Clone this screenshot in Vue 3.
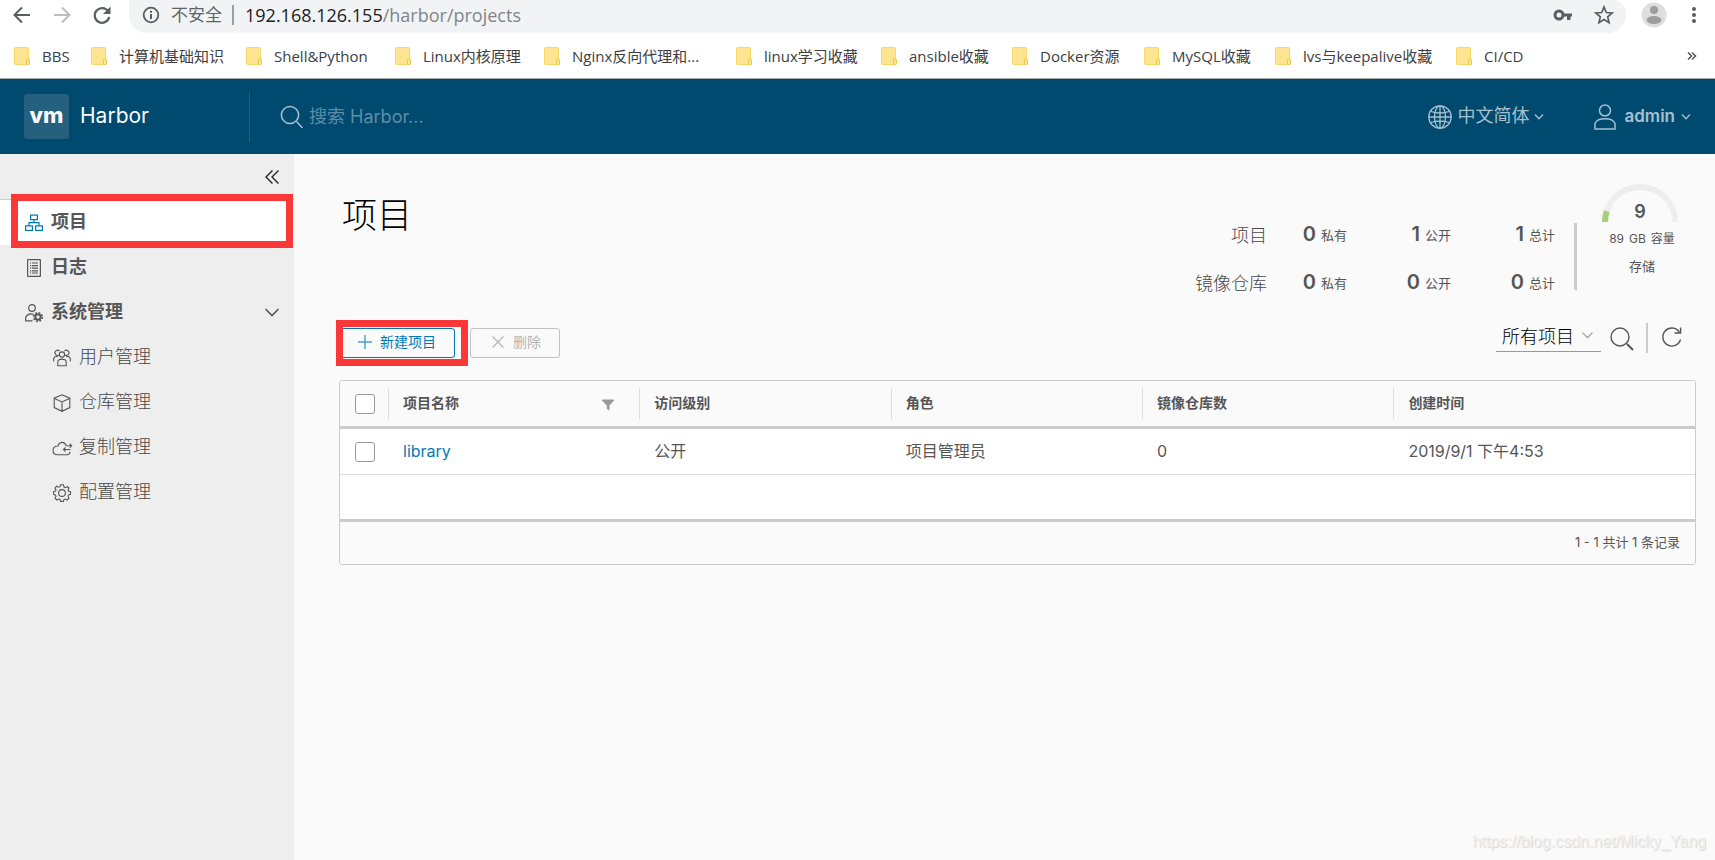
<script setup>
import { ref } from 'vue'

const bookmarks = [
  'BBS', '计算机基础知识', 'Shell&Python', 'Linux内核原理', 'Nginx反向代理和...', 'linux学习收藏',
  'ansible收藏', 'Docker资源', 'MySQL收藏', 'lvs与keepalive收藏', 'CI/CD'
]
const admin = [
  { name: '用户管理', icon: 'users' },
  { name: '仓库管理', icon: 'box' },
  { name: '复制管理', icon: 'cloud' },
  { name: '配置管理', icon: 'cog' }
]
const stats = [
  { label: '项目', values: [[0, '私有'], [1, '公开'], [1, '总计']] },
  { label: '镜像仓库', values: [[0, '私有'], [0, '公开'], [0, '总计']] }
]
const projects = [
  { name: 'library', access: '公开', role: '项目管理员', repos: 0, created: '2019/9/1 下午4:53' }
]
const filter = ref('所有项目')
</script>

<template>
  <div class="page">
    <div class="browser">
      <div class="toolbar">
        <button class="nav-btn" aria-label="后退">
          <svg width="18" height="18" viewBox="0 0 18 18" fill="none" stroke="#5a5e62" stroke-width="2"><path d="M17 9H2M9 1.5L1.5 9L9 16.5" /></svg>
        </button>
        <button class="nav-btn" aria-label="前进">
          <svg width="18" height="18" viewBox="0 0 18 18" fill="none" stroke="#bbbdbf" stroke-width="2"><path d="M1 9H16M9 1.5L16.500 9L9 16.500" /></svg>
        </button>
        <button class="nav-btn" aria-label="刷新页面">
          <svg width="18" height="18" viewBox="0 0 18 18"><path d="M15.200 5.500A7.300 7.300 0 1 0 16.200 11" fill="none" stroke="#5a5e62" stroke-width="2.200" /><path d="M17.500 0.500V8H10z" fill="#5a5e62" /></svg>
        </button>
        <div class="address">
          <svg width="18" height="18" viewBox="0 0 18 18"><circle cx="9" cy="9" r="7.300" fill="none" stroke="#5a5e62" stroke-width="1.800" /><path d="M9 8V13M9 4.800V6.700" stroke="#5a5e62" stroke-width="2" /></svg>
          <span class="unsafe">不安全</span>
          <span class="bar"></span>
          <span class="url">192.168.126.155<i>/harbor/projects</i></span>
          <svg class="key" width="20" height="12" viewBox="0 0 20 12"><circle cx="6" cy="6" r="4" fill="none" stroke="#5a5e62" stroke-width="3" /><path d="M9 4.500H19V7.500H17.500V11H14V7.500H9z" fill="#5a5e62" /></svg>
          <svg width="20" height="20" viewBox="0 0 20 20" fill="none" stroke="#5a5e62" stroke-width="1.700"><path d="M10 2L12.300 7.500L18.200 8L13.700 11.900L15.100 17.700L10 14.600L4.900 17.700L6.300 11.900L1.800 8L7.700 7.500z" /></svg>
        </div>
        <svg class="avatar" width="26" height="26" viewBox="0 0 26 26"><circle cx="13" cy="13" r="12.500" fill="#dedede" /><circle cx="13" cy="8" r="4" fill="#9d9d9d" /><ellipse cx="13" cy="18" rx="7.500" ry="4" fill="#9d9d9d" /></svg>
        <svg width="6" height="18" viewBox="0 0 6 18" fill="#5a5e62"><circle cx="3" cy="3" r="2" /><circle cx="3" cy="9" r="2" /><circle cx="3" cy="15" r="2" /></svg>
      </div>
      <div class="bookmarks">
        <a v-for="b in bookmarks" :key="b" href="#" class="bookmark">
          <svg width="16" height="18" viewBox="0 0 16 18"><rect x="0.500" y="0.500" width="14" height="17" rx="1" fill="#ffe591" stroke="#f8d866" /><rect x="12.500" y="12" width="3" height="5.500" rx="1" fill="#ffe591" stroke="#f0c544" /></svg>
          <span>{{ b }}</span>
        </a>
        <button class="more" aria-label="更多书签">
          <svg width="10" height="8" viewBox="0 0 10 8" fill="none" stroke="#54585c" stroke-width="1.600"><path d="M1 0.500L4.500 4L1 7.500M5 0.500L8.500 4L5 7.500" /></svg>
        </button>
      </div>
    </div>

    <header class="app-header">
      <a href="#" class="brand"><span class="logo">vm</span><span class="name">Harbor</span></a>
      <label class="search">
        <svg width="24" height="24" viewBox="0 0 24 24" fill="none" stroke="#a5c0cf" stroke-width="1.500"><circle cx="10" cy="10" r="8.600" /><path d="M16.500 16.500L22.500 23" /></svg>
        <input type="text" placeholder="搜索 Harbor..." aria-label="搜索 Harbor">
      </label>
      <button class="menu">
        <svg width="24" height="24" viewBox="0 0 24 24" fill="none" stroke="#a5c0cf" stroke-width="1.300"><circle cx="12" cy="12" r="11.200" /><ellipse cx="12" cy="12" rx="5.500" ry="11.200" /><path d="M12 1V23M1 12H23M3 6.500Q12 9.500 21 6.500M3 17.500Q12 14.500 21 17.500" /></svg>
        <span class="lang">中文简体</span>
        <svg class="caret" width="10" height="6" viewBox="0 0 10 6" fill="none" stroke="#a5c0cf" stroke-width="1.300"><path d="M1 0.500L5 4.800L9 0.500" /></svg>
      </button>
      <button class="menu user">
        <svg width="22" height="26" viewBox="0 0 22 26" fill="none" stroke="#a5c0cf" stroke-width="1.500"><circle cx="11" cy="6.500" r="5.500" /><path d="M1 25V19.500C3.500 13.300 18.500 13.300 21 19.500V25z" /></svg>
        <span class="admin">admin</span>
        <svg class="caret" width="10" height="6" viewBox="0 0 10 6" fill="none" stroke="#a5c0cf" stroke-width="1.300"><path d="M1 0.500L5 4.800L9 0.500" /></svg>
      </button>
    </header>

    <div class="body">
      <nav class="sidebar">
        <button class="collapse" aria-label="收起">
          <svg width="14" height="14" viewBox="0 0 14 14" fill="none" stroke="#222" stroke-width="1.400"><path d="M7.500 0.500L1 7L7.500 13.500M13.500 0.500L7 7L13.500 13.500" /></svg>
        </button>
        <a href="#" class="item active">
          <svg width="18" height="18" viewBox="0 0 18 18" fill="none" stroke="#0079b8" stroke-width="1.200"><rect x="5.600" y="1.100" width="6.800" height="4.500" /><rect x="0.600" y="11.900" width="6.800" height="4.500" /><rect x="10.600" y="11.900" width="6.800" height="4.500" /><path d="M9 5.500V8.500M4 12V8.700H14V12" /></svg>
          <span class="text">项目</span>
          <span class="mark"></span>
        </a>
        <a href="#" class="item">
          <svg width="18" height="18" viewBox="0 0 18 18" fill="none" stroke="#565656" stroke-width="1.200"><rect x="2.600" y="0.600" width="12.800" height="16.800" rx="0.500" /><path d="M5 4H6.200M5 6.600H6.200M5 9.200H6.200M5 11.800H6.200M5 14H6.200M7 4H13M7 6.600H13M7 9.200H13M7 11.800H13M7 14H13" /></svg>
          <span class="text">日志</span>
        </a>
        <a href="#" class="item">
          <svg width="18" height="18" viewBox="0 0 18 18" fill="none" stroke="#565656" stroke-width="1.200"><circle cx="7" cy="4" r="3.300" /><path d="M7.500 16.900H0.700V13C2.500 10 6 9.500 8.700 10.300" /><circle cx="13" cy="13" r="2.700" stroke-width="2" /><circle cx="13" cy="13" r="4.400" stroke-width="1.500" stroke-dasharray="1.800 1.650" /></svg>
          <span class="text">系统管理</span>
          <svg class="chevron" width="14" height="9" viewBox="0 0 14 9" fill="none" stroke="#565656" stroke-width="1.600"><path d="M0.500 1L7 7.500L13.500 1" /></svg>
        </a>
        <a v-for="a in admin" :key="a.name" href="#" class="item sub">
          <svg width="18" height="18" viewBox="0 0 18 18" fill="none" stroke="#565656" stroke-width="1.100">
            <template v-if="a.icon === 'users'">
              <circle cx="9" cy="5.500" r="2.600" /><path d="M4.800 16.800V12.500C5.500 9.300 12.500 9.300 13.200 12.500V16.800zM6 6A2.600 2.600 0 1 1 6.500 2M12 6A2.600 2.600 0 1 0 11.500 2M0.700 12.500V9.500C1.200 7.600 3 7.200 4.900 7.700M17.300 12.500V9.500C16.800 7.600 15 7.200 13.100 7.700" />
            </template>
            <path v-else-if="a.icon === 'box'" d="M9 0.800L16.800 4.200V13.600L9 17.300L1.200 13.600V4.200zM1.500 4.500L9 8L16.500 4.500M9 8V17" />
            <path v-else-if="a.icon === 'cloud'" d="M13 7V6.500C12 2.500 6.500 2 5 7C1.500 7 0 9 0 11.200C0 14 2 15.800 4.500 15.800H14.500C16 15.500 17 14.500 17 12.800M13.500 6.700H18.500M16.700 4.700L18.700 6.700L16.700 8.700M17.500 10.500H10M12.500 8.500L10.500 10.500L12.500 12.500" />
            <template v-else>
              <circle cx="9" cy="9" r="3.400" /><path d="M7.500 0.800H10.500L11 3L12.500 3.700L14.500 2.500L16 4L15 6L15.600 7.200L17.500 7.700V10.300L15.500 10.900L15 12.200L16 14.100L14.200 16L12.200 15L10.900 15.600L10.400 17.400H7.600L7 15.500L5.700 15L3.800 16L2 14.200L3 12.300L2.400 11L0.600 10.400V7.700L2.500 7.100L3 5.900L2 4L3.700 2.200L5.700 3.200L7 2.700z" />
            </template>
          </svg>
          <span class="text">{{ a.name }}</span>
        </a>
      </nav>

      <main class="main">
        <section class="head">
          <h1>项目</h1>
          <div class="stats">
            <div v-for="s in stats" :key="s.label" class="stat-row">
              <span class="stat-label">{{ s.label }}</span>
              <span v-for="v in s.values" :key="v[1]" class="stat"><b>{{ v[0] }}</b>{{ v[1] }}</span>
            </div>
          </div>
          <div class="rule"></div>
          <div class="gauge">
            <svg width="76" height="38" viewBox="0 0 76 38" fill="none" stroke-width="6"><path d="M3 38A35 35 0 0 1 73 38" stroke="#eee" /><path d="M3 38A35 35 0 0 1 4.700 27.200" stroke="#a5d279" /></svg>
            <b>9</b>
            <div class="capacity"><span>89</span><span>GB</span><span>容量</span></div>
            <div class="storage">存储</div>
          </div>
        </section>

        <div class="actions">
          <div class="create">
            <button class="btn primary">
              <svg width="14" height="14" viewBox="0 0 14 14" fill="none" stroke="#4da1cd" stroke-width="1.500"><path d="M7 0V14M0 7H14" /></svg>
              新建项目
            </button>
            <span class="mark"></span>
          </div>
          <button class="btn" disabled>
            <svg width="14" height="14" viewBox="0 0 14 14" fill="none" stroke="#b5b5b5" stroke-width="1.300"><path d="M1.500 1.500L12.500 12.500M12.500 1.500L1.500 12.500" /></svg>
            删除
          </button>
          <div class="filter">
            <select v-model="filter" aria-label="项目筛选"><option>所有项目</option></select>
            <svg width="11" height="7" viewBox="0 0 11 7" fill="none" stroke="#9a9a9a" stroke-width="1.200"><path d="M0.500 0.700L5.500 5.700L10.500 0.700" /></svg>
          </div>
          <button class="icon-btn find" aria-label="搜索">
            <svg width="24" height="24" viewBox="0 0 24 24" fill="none" stroke="#565656" stroke-width="1.400"><circle cx="10" cy="10" r="9" /><path d="M17 17L23 23" stroke-width="2" /></svg>
          </button>
          <span class="split"></span>
          <button class="icon-btn" aria-label="刷新">
            <svg width="20" height="20" viewBox="0 0 20 20" fill="none" stroke="#565656" stroke-width="1.400"><path d="M17.300 5A9 9 0 1 0 18.500 12.500M18.600 0.500V6H12.500" /></svg>
          </button>
        </div>

        <div class="datagrid">
          <table>
            <colgroup><col class="c-check"><col class="c-data"><col class="c-data"><col class="c-data"><col class="c-data"><col></colgroup>
            <thead>
              <tr>
                <th><input type="checkbox" aria-label="全选"></th>
                <th><div class="cell">项目名称
                  <button class="funnel" aria-label="筛选项目名称"><svg width="12" height="12" viewBox="0 0 12 12" fill="#999"><path d="M0 0.500H12V1.500L7.500 6.500V11.500L4.800 10V6.500L0 1.500z" /></svg></button>
                </div></th>
                <th><div class="cell">访问级别</div></th>
                <th><div class="cell">角色</div></th>
                <th><div class="cell">镜像仓库数</div></th>
                <th><div class="cell">创建时间</div></th>
              </tr>
            </thead>
            <tbody>
              <tr v-for="p in projects" :key="p.name">
                <td><input type="checkbox" :aria-label="p.name"></td>
                <td><a href="#">{{ p.name }}</a></td>
                <td>{{ p.access }}</td>
                <td>{{ p.role }}</td>
                <td>{{ p.repos }}</td>
                <td>{{ p.created }}</td>
              </tr>
            </tbody>
          </table>
          <div class="blank"></div>
          <div class="foot">1 - 1 共计 1 条记录</div>
        </div>
        <div class="watermark">https://blog.csdn.net/Micky_Yang</div>
      </main>
    </div>
  </div>
</template>

<style>
body { margin: 0; background: #fafafa; }
</style>

<style scoped>
.page {
  display: flex; flex-direction: column; min-height: 100vh;
  font-family: Inter, "Noto Sans CJK SC", sans-serif;
  font-size: 16px; line-height: 24px; font-weight: 400; color: #565656;
}
.page * { box-sizing: border-box; }
button { font: inherit; color: inherit; background: none; border: 0; padding: 0; margin: 0; }
a { text-decoration: none; color: inherit; }
svg { display: block; flex: none; overflow: visible; }

.browser { background: #fff; border-bottom: 1px solid #a9a9a9; font-family: "Open Sans", "Noto Sans CJK SC", sans-serif; }
.toolbar { display: flex; align-items: center; height: 33px; padding: 0 18px 0 13px; }
.toolbar > * { margin-bottom: 3px; }
.nav-btn { width: 40px; }
.toolbar .address {
  display: flex; align-items: center; flex: 1; height: 33px; margin: 0 15px 0 -4px; padding: 0 12px 3px 13px;
  background: #f1f3f4; border-radius: 0 14px 18px 18px; font-size: 17px; color: #5f6368;
}
.unsafe { margin-left: 11px; }
.bar { width: 2px; height: 20px; margin: 0 11px 0 10px; background: #9aa0a6; }
.url { color: #202124; font-size: 18px; }
.url i { font-style: normal; color: #80868b; }
.key { margin: 0 21px 0 auto; }
.avatar { margin-right: 24px; }
.bookmarks {
  display: grid; align-items: center; height: 45px; padding: 0 18px 0 14px; font-size: 15px; color: #3c4043;
  grid-template-columns: 77px 155px 149px 149px 192px 145px 131px 132px 131px 181px auto 1fr;
}
.bookmark { display: flex; align-items: center; gap: 12px; white-space: nowrap; }
.more { justify-self: end; }

.app-header { display: flex; align-items: center; height: 75px; padding: 0 24px; background: #004a70; color: #a5c0cf; }
.brand { display: flex; align-items: center; gap: 11px; width: 226px; height: 50px; border-right: 1px solid #25607f; font-size: 21px; color: #fafafa; }
.logo { width: 45px; height: 45px; border-radius: 3px; background: #25607f; text-align: center; line-height: 43px; font-size: 22px; font-weight: 800; }
.name, .lang, .admin, .text { padding-bottom: 2px; }
.search { display: flex; align-items: center; flex: 1; gap: 5px; margin-left: 30px; }
.search input { width: 280px; border: 0; padding: 0; background: none; outline: 0; font: inherit; font-size: 18px; color: #fff; }
.search input::placeholder { color: #5f8ca5; opacity: 1; }
.menu { display: flex; align-items: center; gap: 5px; font-size: 18px; }
.user { margin-left: 50px; gap: 6px; font-size: 17px; }
.admin { margin-left: 2px; font-weight: 600; }

.body { display: flex; flex: 1; }
.sidebar { flex: none; width: 294px; background: #eee; }
.collapse { display: flex; align-items: center; justify-content: flex-end; width: 100%; height: 46px; padding: 0 15px 0 0; border-bottom: 1px solid #ccc; }
.item { position: relative; display: flex; align-items: center; gap: 8px; height: 45px; padding: 0 15px 0 25px; font-size: 18px; font-weight: 700; }
.active { background: #fff; }
.sub { padding-left: 53px; font-weight: 300; }
.sub .text { color: #484848; }
.chevron { margin-left: auto; }
.mark { position: absolute; border: 7px solid #fc3737; pointer-events: none; }
.active .mark { inset: -6px 1px -3px 11px; }

.main { display: flex; flex-direction: column; flex: 1; min-width: 0; padding: 0 19px 8px 45px; background: #fafafa; }
.head { display: flex; min-height: 169px; padding-right: 18px; }
h1 { flex: 1; margin: 38px 0 0 3px; font-size: 35px; line-height: 46px; font-weight: 300; color: #000; }
.stats { margin-top: 57px; }
.stat-row { display: flex; align-items: center; justify-content: flex-end; height: 48px; font-size: 13px; }
.stat-label { padding-top: 2px; font-size: 18px; font-weight: 300; color: #484848; }
.stat { display: flex; align-items: center; justify-content: flex-end; width: 104px; }
.stat:nth-child(2) { width: 80px; }
.stat b { margin-right: 5px; padding-bottom: 2px; font-size: 20px; font-weight: 600; }
.rule { width: 3px; height: 67px; margin: 69px 25px 0 19px; background: #ccc; }
.gauge { position: relative; width: 76px; margin-top: 30px; text-align: center; font-size: 12px; line-height: 20px; }
.gauge b { position: absolute; top: 18px; left: 0; right: 0; font-size: 18px; font-weight: 600; }
.capacity { display: flex; justify-content: center; gap: 5px; margin-top: 7px; padding-left: 4px; white-space: nowrap; }
.storage { margin-top: 7px; padding-left: 4px; font-size: 13px; }

.actions { display: flex; align-items: flex-start; padding-right: 14px; }
.create { position: relative; margin-right: 15px; }
.create .mark { inset: -3px -13px -8px -3px; }
.btn { display: flex; align-items: center; gap: 8px; height: 30px; margin-top: 5px; padding: 0 18px 2px 20px; border: 1px solid #c1c1c1; border-radius: 3px; font-size: 14px; color: #b5b5b5; }
.create .btn { padding-left: 18px; }
.primary { border-color: #0079b8; color: #0079b8; }
.filter { position: relative; margin-left: auto; width: 105px; }
.filter select { display: block; appearance: none; width: 100%; height: 29px; padding: 0 24px 0 6px; border: 0; border-bottom: 1px solid #999; border-radius: 0; background: none; font: inherit; font-size: 18px; font-weight: 300; color: #000; }
.filter svg { position: absolute; top: 9px; right: 8px; pointer-events: none; }
.icon-btn { margin-top: 4px; }
.find { margin: 4px 12px 0 9px; }
.split { width: 2px; height: 30px; margin-right: 14px; background: #ccc; }

.datagrid { margin-top: 22px; border: 1px solid #ccc; border-radius: 3px; background: #fff; overflow: hidden; }
table { width: 100%; table-layout: fixed; border-spacing: 0; border-collapse: separate; }
.c-check { width: 48px; }
.c-data { width: 18.55%; }
th { height: 48px; padding: 0; background: #fafafa; border-bottom: 3px solid #ccc; text-align: left; font-size: 14px; font-weight: 700; }
.cell { display: flex; align-items: center; height: 31px; padding: 0 25px 2px 14px; border-left: 1px solid #ddd; }
th:first-child { padding-bottom: 0; }
.funnel { margin: 4px 0 0 auto; }
td { height: 46px; padding: 0 0 2px 15px; border-bottom: 1px solid #ddd; }
td:first-child { padding: 0; }
td a { color: #0079b8; }
input[type="checkbox"] { display: block; appearance: none; width: 20px; height: 20px; margin: 0 0 0 15px; border: 1px solid #999; border-radius: 3px; background: #fff; }
.blank { height: 44px; }
.foot { height: 45px; padding-right: 15px; border-top: 3px solid #ccc; background: #fafafa; text-align: right; font-size: 13px; line-height: 40px; }
.watermark { margin: auto -10px 0 auto; font: 400 16px/20px "Liberation Sans", Arial, sans-serif; color: #f0f0f0; text-shadow: 1px 1px 1px #d6d6d6; }
</style>
